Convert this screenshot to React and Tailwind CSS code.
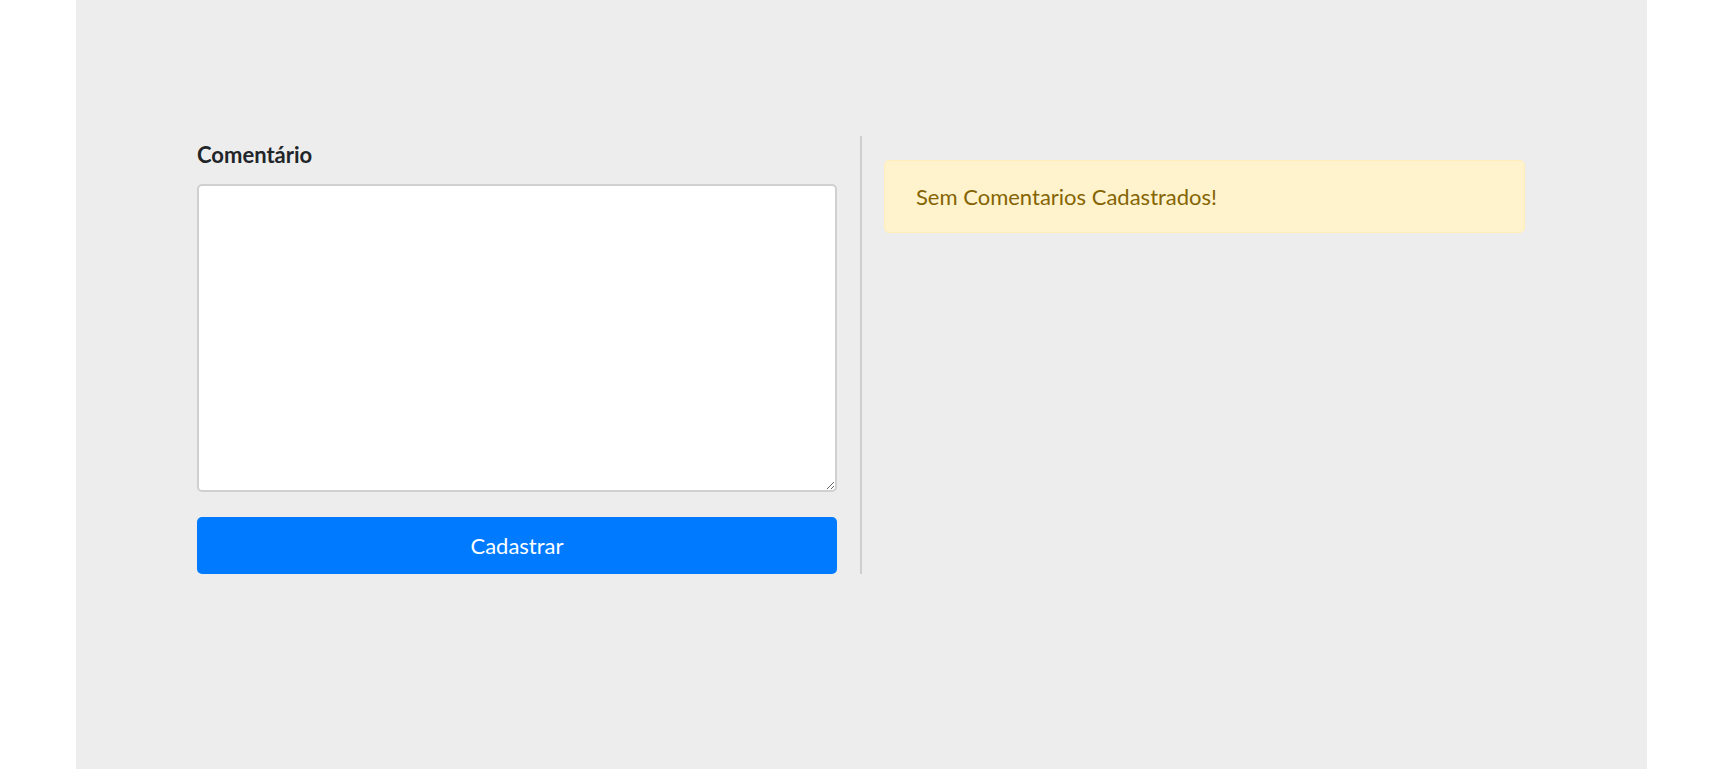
export default function App() {
  return (
    <div className="min-h-screen bg-white" style={{ fontFamily: "Lato, 'Open Sans', sans-serif" }}>
      <div className="ml-[76px] w-[1571px] min-h-[769px] bg-[#ededed] pt-[136px] pl-[121px]">
        <div className="flex w-[1328px]">
          <div className="w-[640px] flex flex-col">
            <label className="block text-[22px] leading-[30px] font-bold text-[#212529] mt-[4px]">
              Comentário
            </label>
            <textarea
              className="mt-[14px] h-[308px] w-full rounded-[5px] border-2 border-[#d0d0d0] bg-white p-3 text-[20px] outline-none resize-y"
            />
            <button className="mt-[25px] h-[57px] w-full rounded-[5px] bg-[#007bff] text-[22px] text-white">
              Cadastrar
            </button>
          </div>
          <div className="ml-[23px] w-[2px] bg-[#cfcfcf] h-[438px]" />
          <div className="ml-[22px] w-[641px]">
            <div className="mt-[24px] h-[73px] rounded-[5px] border border-[#ffeeba] bg-[#fff3cd] px-[31px] flex items-center text-[22px] text-[#856404]">
              Sem Comentarios Cadastrados!
            </div>
          </div>
        </div>
      </div>
    </div>
  );
}
